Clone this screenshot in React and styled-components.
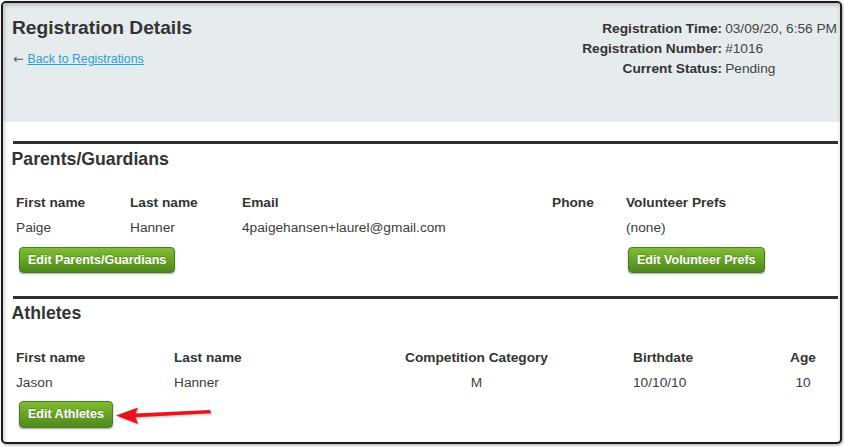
import React from "react";
import styled, { createGlobalStyle } from "styled-components";

const Global = createGlobalStyle`
  html, body { margin: 0; padding: 0; background: #ffffff; }
  body { font-family: "Liberation Sans", Arial, sans-serif; color: #333; }
  * { box-sizing: border-box; }
`;

const Page = styled.div`
  width: 844px;
  height: 447px;
  padding: 1px 0 0 1px;
  background: #fff;
`;

const Frame = styled.div`
  position: relative;
  width: 841px;
  height: 443px;
  border: 2px solid #1c1c1c;
  border-radius: 5px;
  overflow: hidden;
  background: #fff;
  box-shadow: 1px 1px 3px rgba(0, 0, 0, 0.35);
  display: flex;
  flex-direction: column;
  &::after {
    content: "";
    position: absolute;
    inset: 0;
    border-radius: 3px;
    box-shadow: inset 1px 2px 4px rgba(0, 0, 0, 0.22);
    pointer-events: none;
  }
`;

const Header = styled.header`
  height: 119px;
  flex: none;
  background: #e6ebee;
  padding: 14px 3px 0 9px;
  display: flex;
  justify-content: space-between;
  align-items: flex-start;
`;

const TitleBlock = styled.div`
  display: flex;
  flex-direction: column;
`;

const Title = styled.h1`
  margin: 0;
  font-size: 19.2px;
  line-height: 22px;
  font-weight: bold;
  color: #333;
`;

const BackRow = styled.div`
  margin-top: 12px;
  margin-left: 1px;
  font-size: 12.3px;
  line-height: 16px;
  color: #444;
  display: flex;
  align-items: baseline;
  gap: 4px;
`;

const BackArrow = styled.span`
  font-family: "DejaVu Sans", sans-serif;
  font-size: 12.5px;
  color: #555;
`;

const BackLink = styled.a`
  color: #2a9fd6;
  text-decoration: underline;
  cursor: pointer;
`;

const Info = styled.div`
  margin-top: 2px;
  display: grid;
  grid-template-columns: auto auto;
  column-gap: 3px;
  font-size: 13.7px;
  line-height: 20px;
`;

const InfoLabel = styled.span`
  font-weight: bold;
  text-align: right;
  color: #333;
`;

const InfoValue = styled.span`
  color: #444;
`;

const Body = styled.main`
  padding: 19px 2px 0 10px;
  display: flex;
  flex-direction: column;
`;

const Section = styled.section`
  padding-bottom: ${(p) => p.$pb || 0}px;
  display: flex;
  flex-direction: column;
`;

const Rule = styled.div`
  height: 3px;
  background: #303030;
`;

const Heading = styled.h3`
  margin: 4.5px 0 0 -1.5px;
  font-size: 17.7px;
  line-height: 20px;
  font-weight: bold;
  color: #333;
`;

const Table = styled.div`
  margin: 24.5px 0 0 3px;
  display: grid;
  grid-template-columns: ${(p) => p.$cols};
  row-gap: 5px;
  font-size: 13.7px;
  line-height: 20px;
`;

const Th = styled.div`
  font-weight: bold;
  color: #333;
  white-space: nowrap;
  text-align: ${(p) => p.$align || "left"};
`;

const Td = styled.div`
  color: #3c3c3c;
  white-space: nowrap;
  text-align: ${(p) => p.$align || "left"};
`;

const ButtonCell = styled.div`
  grid-column: ${(p) => p.$col};
  margin-top: 3.5px;
  margin-left: ${(p) => p.$ml || 0}px;
  display: flex;
  align-items: center;
`;

const ButtonRow = styled.div`
  margin: 8.5px 0 0 6px;
  display: flex;
  align-items: center;
  gap: 2px;
`;

const GreenButton = styled.button`
  font-family: "Liberation Sans", Arial, sans-serif;
  font-size: 12.5px;
  font-weight: bold;
  line-height: 14.5px;
  color: #fff;
  padding: 5px 8px;
  border: 1px solid #4a7d1c;
  border-radius: 4px;
  background: linear-gradient(to bottom, #80bc34 0%, #6aa526 45%, #4e891c 100%);
  box-shadow: 0 1px 2px rgba(0, 0, 0, 0.35);
  text-shadow: 0 -1px 0 rgba(0, 0, 0, 0.2);
  cursor: pointer;
  white-space: nowrap;
`;

const ArrowSvg = styled.svg`
  display: block;
  flex: none;
  margin-top: -1px;
  filter: drop-shadow(1px 1px 1px rgba(0, 0, 0, 0.3));
`;

const RedArrow = () => (
  <ArrowSvg width="98" height="22" viewBox="0 0 98 22">
    <polygon
      points="1,12.5 23,4.5 20.5,10.5 95,7 96,10.3 20.5,14.3 23,21"
      fill="#e8141b"
    />
  </ArrowSvg>
);

const parentCols = "114px 112px 310px 74px 1fr";
const athleteCols = "158px 146px 313px 135px 70px";

export default function App() {
  return (
    <>
      <Global />
      <Page>
        <Frame>
          <Header>
            <TitleBlock>
              <Title>Registration Details</Title>
              <BackRow>
                <BackArrow>←</BackArrow>
                <BackLink>Back to Registrations</BackLink>
              </BackRow>
            </TitleBlock>
            <Info>
              <InfoLabel>Registration Time:</InfoLabel>
              <InfoValue>03/09/20, 6:56 PM</InfoValue>
              <InfoLabel>Registration Number:</InfoLabel>
              <InfoValue>#1016</InfoValue>
              <InfoLabel>Current Status:</InfoLabel>
              <InfoValue>Pending</InfoValue>
            </Info>
          </Header>
          <Body>
            <Section $pb={22.5}>
              <Rule />
              <Heading>Parents/Guardians</Heading>
              <Table $cols={parentCols}>
                <Th>First name</Th>
                <Th>Last name</Th>
                <Th>Email</Th>
                <Th>Phone</Th>
                <Th>Volunteer Prefs</Th>
                <Td>Paige</Td>
                <Td>Hanner</Td>
                <Td>4paigehansen+laurel@gmail.com</Td>
                <Td></Td>
                <Td>(none)</Td>
                <ButtonCell $col="1 / 5" $ml={3}>
                  <GreenButton>Edit Parents/Guardians</GreenButton>
                </ButtonCell>
                <ButtonCell $col="5" $ml={2}>
                  <GreenButton>Edit Volunteer Prefs</GreenButton>
                </ButtonCell>
              </Table>
            </Section>
            <Section>
              <Rule />
              <Heading>Athletes</Heading>
              <Table $cols={athleteCols}>
                <Th>First name</Th>
                <Th>Last name</Th>
                <Th $align="center">Competition Category</Th>
                <Th>Birthdate</Th>
                <Th $align="center">Age</Th>
                <Td>Jason</Td>
                <Td>Hanner</Td>
                <Td $align="center">M</Td>
                <Td>10/10/10</Td>
                <Td $align="center">10</Td>
              </Table>
              <ButtonRow>
                <GreenButton>Edit Athletes</GreenButton>
                <RedArrow />
              </ButtonRow>
            </Section>
          </Body>
        </Frame>
      </Page>
    </>
  );
}
